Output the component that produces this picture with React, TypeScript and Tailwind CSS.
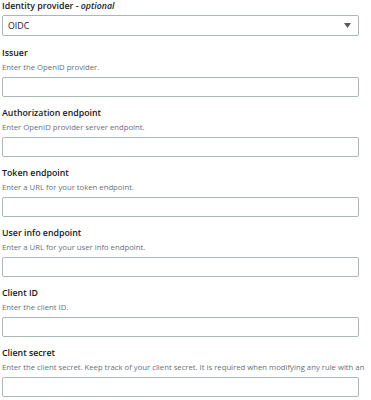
import React from "react";

const fields = [
  { label: "Issuer", desc: "Enter the OpenID provider." },
  { label: "Authorization endpoint", desc: "Enter OpenID provider server endpoint." },
  { label: "Token endpoint", desc: "Enter a URL for your token endpoint." },
  { label: "User info endpoint", desc: "Enter a URL for your user info endpoint." },
  { label: "Client ID", desc: "Enter the client ID." },
  {
    label: "Client secret",
    desc: "Enter the client secret. Keep track of your client secret. It is required when modifying any rule with an",
  },
];

export default function App() {
  return (
    <div
      className="w-[371px] h-[400px] overflow-hidden bg-white text-[#16191f]"
      style={{ fontFamily: '"Open Sans", "Noto Sans", sans-serif' }}
    >
      <div className="ml-[2px] w-[357px] flex flex-col">
        <div className="flex flex-col">
          <div className="h-[12px] leading-[12px] text-[8.8px] font-semibold whitespace-nowrap">
            Identity provider - <span className="italic">optional</span>
          </div>
          <div className="mt-[3px] h-[21px] border border-[#aab7b8] rounded-[2px] flex items-center justify-between pl-[5px] pr-[7px]">
            <span className="text-[8.8px] leading-[12px] font-medium">OIDC</span>
            <svg width="7" height="5" viewBox="0 0 7 5">
              <path d="M0 0 L7 0 L3.5 5 Z" fill="#545b64" />
            </svg>
          </div>
        </div>
        <div className="mt-[11px] flex flex-col gap-[10px]">
          {fields.map((f) => (
            <div key={f.label} className="flex flex-col">
              <div className="h-[12px] leading-[12px] text-[8.8px] font-semibold whitespace-nowrap">
                {f.label}
              </div>
              <div className="mt-[2px] h-[12px] leading-[12px] text-[7.72px] text-[#687078] whitespace-nowrap">
                {f.desc}
              </div>
              <div className="mt-[4px] h-[20px] border border-[#aab7b8] rounded-[2px] bg-white" />
            </div>
          ))}
        </div>
      </div>
    </div>
  );
}
